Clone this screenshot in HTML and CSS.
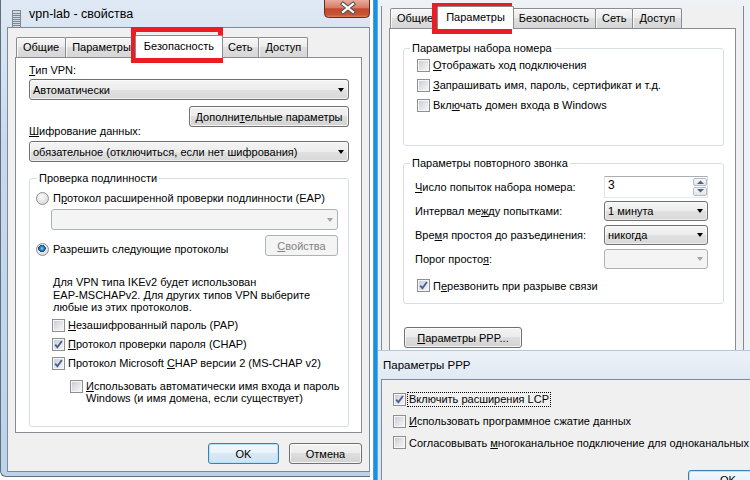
FILE: index.html
```html
<!DOCTYPE html>
<html>
<head>
    <meta charset="utf-8">
    <title>vpn-lab - свойства</title>
    <link rel="stylesheet" href="styles.css">
</head>
<body>
    <!-- security tab window -->
    <div class="win win-left">
        <div class="titlebar">
            <svg class="app-icon" width="9" height="18" viewBox="0 0 9 18">
                <rect x="0.5" y="0.5" width="8" height="17" fill="#d3d9e0" stroke="#7d8894"/>
                <path d="M1 3.5h7M1 5.5h7M1 7.5h7M1 9.5h7M1 11.5h7M1 13.5h7M1 15.5h7" stroke="#7a8795" stroke-width="1"/>
            </svg>
            <span class="title">vpn-lab - свойства</span>
            <div class="close">
                <svg width="46" height="18" viewBox="0 0 46 18">
                    <defs>
                        <linearGradient id="closeFill" x1="0" y1="0" x2="0" y2="1">
                            <stop offset="0" stop-color="#e8ab9c"/>
                            <stop offset="0.45" stop-color="#d67b66"/>
                            <stop offset="0.5" stop-color="#c4472d"/>
                            <stop offset="0.85" stop-color="#c85536"/>
                            <stop offset="1" stop-color="#e28c6c"/>
                        </linearGradient>
                    </defs>
                    <path d="M0.5 0V13.5a4 4 0 0 0 4 4H41.5a4 4 0 0 0 4-4V0" fill="url(#closeFill)" stroke="#6b2a1f"/>
                    <path d="M19 4l10 8M29 4l-10 8" stroke="#5a5a5a" stroke-width="4.4" stroke-linecap="square"/>
                    <path d="M19 4l10 8M29 4l-10 8" stroke="#fff" stroke-width="2.2" stroke-linecap="square"/>
                </svg>
            </div>
        </div>
        <div class="client">
            <div class="tabs">
                <div class="tab">Общие</div>
                <div class="tab">Параметры</div>
                <div class="tab sel">Безопасность</div>
                <div class="tab">Сеть</div>
                <div class="tab">Доступ</div>
            </div>
            <div class="panel sec">
                <div class="lbl lbl-vpn"><u>Т</u>ип VPN:</div>
                <div class="combo combo-vpn">Автоматически</div>
                <div class="row-end"><div class="btn btn-more">Дополни<u>т</u>ельные параметры</div></div>
                <div class="lbl lbl-enc"><u>Ш</u>ифрование данных:</div>
                <div class="combo combo-enc">обязательное (отключиться, если нет шифрования)</div>
                <fieldset class="group auth">
                    <legend>Проверка подлинности</legend>
                    <div class="opt opt-eap"><span class="rad"></span><span>П<u>р</u>отокол расширенной проверки подлинности (EAP)</span></div>
                    <div class="combo dis combo-eap"></div>
                    <div class="opt-row">
                        <div class="opt"><span class="rad on"></span><span>Разрешить сле<u>д</u>ующие протоколы</span></div>
                        <div class="btn dis btn-props"><u>С</u>войства</div>
                    </div>
                    <p class="note">Для VPN типа IKEv2 будет использован<br>EAP-MSCHAPv2. Для других типов VPN выберите<br>любые из этих протоколов.</p>
                    <div class="ck ck-first"><span class="chk"></span><span><u>Н</u>езашифрованный пароль (PAP)</span></div>
                    <div class="ck"><span class="chk"><svg width="11" height="11" viewBox="0 0 11 11"><path d="M2.2 5.6l2.2 2.7L8.9 2" fill="none" stroke="#4b5f96" stroke-width="1.9"/></svg></span><span><u>П</u>ротокол проверки пароля (CHAP)</span></div>
                    <div class="ck"><span class="chk"><svg width="11" height="11" viewBox="0 0 11 11"><path d="M2.2 5.6l2.2 2.7L8.9 2" fill="none" stroke="#4b5f96" stroke-width="1.9"/></svg></span><span>Протокол Microsoft <u>C</u>HAP версии 2 (MS-CHAP v2)</span></div>
                    <div class="ck ck-sub"><span class="chk"></span><span><u>И</u>спользовать автоматически имя входа и пароль<br>Windows (и имя домена, если существует)</span></div>
                </fieldset>
            </div>
            <div class="actions">
                <div class="btn def btn-ok">OK</div>
                <div class="btn btn-cancel">Отмена</div>
            </div>
        </div>
    </div>

    <div class="divider"></div>

    <div class="col-right">
        <!-- options tab window -->
        <div class="win win-right">
            <div class="client">
                <div class="tabs">
                    <div class="tab">Общие</div>
                    <div class="tab sel">Параметры</div>
                    <div class="tab">Безопасность</div>
                    <div class="tab">Сеть</div>
                    <div class="tab">Доступ</div>
                </div>
                <div class="panel opts">
                    <fieldset class="group dial">
                        <legend>Параметры набора номера</legend>
                        <div class="ck"><span class="chk"></span><span><u>О</u>тображать ход подключения</span></div>
                        <div class="ck"><span class="chk"></span><span><u>З</u>апрашивать имя, пароль, сертификат и т.д.</span></div>
                        <div class="ck"><span class="chk"></span><span>Вкл<u>ю</u>чать домен входа в Windows</span></div>
                    </fieldset>
                    <fieldset class="group redial">
                        <legend>Параметры повторного звонка</legend>
                        <div class="frow frow-first">
                            <span><u>Ч</u>исло попыток набора номера:</span>
                            <div class="spin">
                                <span class="spin-val">3</span>
                                <span class="spin-btns">
                                    <span class="sb"><svg width="7" height="4" viewBox="0 0 7 4"><path d="M0 4L3.5 0.5L7 4z" fill="#4d6185"/></svg></span>
                                    <span class="sb"><svg width="7" height="4" viewBox="0 0 7 4"><path d="M0 0L3.5 3.5L7 0z" fill="#4d6185"/></svg></span>
                                </span>
                            </div>
                        </div>
                        <div class="frow">
                            <span>Интервал ме<u>ж</u>ду попытками:</span>
                            <div class="combo combo-sm">1 минута</div>
                        </div>
                        <div class="frow">
                            <span>Вре<u>м</u>я простоя до разъединения:</span>
                            <div class="combo combo-sm">никогда</div>
                        </div>
                        <div class="frow">
                            <span>Порог просто<u>я</u>:</span>
                            <div class="combo dis combo-sm"></div>
                        </div>
                        <div class="ck ck-redial"><span class="chk"><svg width="11" height="11" viewBox="0 0 11 11"><path d="M2.2 5.6l2.2 2.7L8.9 2" fill="none" stroke="#4b5f96" stroke-width="1.9"/></svg></span><span>П<u>е</u>резвонить при разрыве связи</span></div>
                    </fieldset>
                    <div class="btn btn-ppp"><u>П</u>араметры PPP...</div>
                </div>
            </div>
        </div>

        <!-- PPP settings window -->
        <div class="win win-ppp">
            <div class="ppp-title">Параметры PPP</div>
            <div class="client">
                <div class="ck prow"><span class="chk"><svg width="11" height="11" viewBox="0 0 11 11"><path d="M2.2 5.6l2.2 2.7L8.9 2" fill="none" stroke="#4b5f96" stroke-width="1.9"/></svg></span><span class="focus">Включить расширения LCP</span></div>
                <div class="ck prow"><span class="chk"></span><span><u>И</u>спользовать программное сжатие данных</span></div>
                <div class="ck prow"><span class="chk"></span><span>Согласовывать <u>м</u>ногоканальное подключение для одноканальных</span></div>
                <div class="btn def btn-ppp-ok">OK</div>
            </div>
        </div>
    </div>

    <div class="mark mark-left"></div>
    <div class="mark mark-right"></div>
</body>
</html>
```

FILE: styles.css
```css
*, *::before, *::after {
    box-sizing: border-box;
}

body {
    margin: 0;
    width: 750px;
    height: 480px;
    overflow: hidden;
    display: flex;
    background: #fff;
    font-family: "Liberation Sans", Arial, sans-serif;
    font-size: 11px;
    line-height: 14px;
    color: #000;
}

u {
    text-decoration: underline;
    text-underline-offset: 1px;
}

/* window frames */
.win-left {
    width: 370px;
    height: 477px;
    flex: none;
    display: flex;
    flex-direction: column;
    padding-left: 6px;
    border-left: 1px solid #5f6f82;
    border-bottom: 1px solid #5f6f82;
    border-bottom-left-radius: 6px;
    background: linear-gradient(to bottom, #dfe9f4, #c9d9ec 30%, #bdd2e9);
}

.titlebar {
    height: 27px;
    flex: none;
    display: flex;
    align-items: flex-start;
}

.app-icon {
    margin: 10px 0 0 5px;
}

.title {
    margin: 7px 0 0 8px;
    font-size: 12.5px;
    line-height: 14px;
}

.close {
    margin-left: auto;
    height: 18px;
}

.close svg {
    display: block;
}

.client {
    border: 1px solid #7c8a9b;
    background: #f0f0f0;
    padding: 0 7px;
}

.win-left .client {
    height: 445px;
    flex: none;
}

.divider {
    width: 8px;
    flex: none;
    background: linear-gradient(to right, #fff 3px, #62b5ef 3px, #1b8fe2 4px, #1b8fe2 7px, #5aaeea 7px);
}

.col-right {
    width: 372px;
    flex: none;
    display: flex;
    flex-direction: column;
}

.win-right {
    height: 350px;
    flex: none;
    overflow: hidden;
    padding: 0 6px 0 3px;
    background: #eef2f7;
}

.win-right .client {
    border-top: 0;
    height: 420px;
}

.win-ppp {
    flex: 1;
    display: flex;
    flex-direction: column;
    padding-left: 3px;
    border-top: 1px solid #b7c7da;
    background: linear-gradient(to bottom, #edf2f8, #e0e9f3 28px, #d9e4f0);
    overflow: hidden;
}

.ppp-title {
    height: 28px;
    flex: none;
    padding-left: 2px;
    line-height: 28px;
    font-size: 11.5px;
}

.win-ppp .client {
    flex: 1;
    border-right: 0;
    border-bottom: 0;
    padding: 9px 0 0 11px;
    white-space: nowrap;
    overflow: hidden;
}

/* tabs */
.tabs {
    display: flex;
    align-items: flex-end;
    height: 22px;
    margin-top: 7px;
    padding-left: 1px;
}

.win-right .tabs {
    margin-top: 6px;
}

.tab {
    height: 20px;
    padding: 0 6px;
    line-height: 18px;
    margin-right: -1px;
    border: 1px solid #898c95;
    border-bottom: 0;
    border-radius: 2px 2px 0 0;
    background: linear-gradient(#f7f7f7, #ebebeb 50%, #dfdfdf 50%, #d6d6d6);
    box-shadow: inset 1px 1px 0 rgba(255, 255, 255, 0.8);
}

.tab.sel {
    height: 23px;
    margin: 0 -2px -1px -2px;
    padding: 0 8px;
    line-height: 20px;
    background: #fff;
    box-shadow: none;
    position: relative;
    z-index: 1;
}

.panel {
    height: 376px;
    border: 1px solid #898c95;
    background: #fff;
    display: flex;
    flex-direction: column;
}

.panel > * {
    flex: none;
}

.sec {
    padding: 0 12px 0 13px;
}

.opts {
    padding: 0 11px 0 13px;
}

/* security tab */
.lbl-vpn {
    margin-top: 5px;
}

.combo-vpn {
    margin-top: 2px;
}

.row-end {
    display: flex;
    justify-content: flex-end;
    margin-top: 6px;
}

.btn-more {
    width: 160px;
}

.lbl-enc {
    margin-top: -3px;
}

.combo-enc {
    margin-top: 3px;
    height: 20px;
}

.group {
    margin: 0;
    border: 1px solid #d5dfe5;
    border-radius: 3px;
    min-width: 0;
}

.group legend {
    padding: 0 2px;
    line-height: 14px;
}

.auth {
    margin-top: 9px;
    height: 256px;
    padding: 0 10px 0 6px;
}

.auth legend {
    margin-left: 1px;
}

.opt {
    display: flex;
    align-items: center;
    height: 14px;
    white-space: nowrap;
}

.opt-eap {
    margin-top: 6px;
}

.combo-eap {
    margin: 4px 0 0 15px;
    height: 20px;
}

.opt-row {
    display: flex;
    align-items: flex-end;
    justify-content: space-between;
    margin-top: 5px;
}

.btn-props {
    width: 73px;
}

.note {
    margin: 20px 0 0 17px;
    line-height: 12.5px;
}

.ck {
    display: flex;
    align-items: center;
    height: 19px;
    margin-left: 16px;
    white-space: nowrap;
}

.ck-first {
    margin-top: 2px;
}

.ck-sub {
    align-items: flex-start;
    height: auto;
    margin: 7px 0 0 34px;
    line-height: 12px;
}

.actions {
    display: flex;
    justify-content: flex-end;
    gap: 10px;
    margin-top: 10px;
}

.btn-ok {
    width: 71px;
}

.btn-cancel {
    width: 73px;
}

/* options tab */
.dial {
    margin-top: 12px;
    height: 105px;
    padding: 0 0 0 13px;
}

.dial legend {
    margin-left: -7px;
}

.dial .ck {
    margin-left: 0;
    height: 20px;
}

.redial {
    margin-top: 10px;
    height: 148px;
    padding: 0 15px 0 11px;
}

.redial legend {
    margin-left: -5px;
}

.frow {
    display: flex;
    align-items: center;
    justify-content: space-between;
    height: 24px;
    padding-top: 1px;
}

.frow-first {
    margin-top: 4px;
}

.ck-redial {
    margin: 6px 0 0 2px;
}

.btn-ppp {
    width: 118px;
    margin: 23px 0 0 1px;
    align-self: flex-start;
}

/* PPP window */
.win-ppp .ck {
    margin-left: 0;
}

.prow {
    height: 21.5px;
}

.focus {
    outline: 1px dotted #000;
    padding: 0 1px;
    margin-left: -1px;
    line-height: 13px;
}

.btn-ppp-ok {
    width: 80px;
    margin: 16px 0 0 295px;
}

/* controls */
.btn {
    height: 21px;
    display: flex;
    align-items: center;
    justify-content: center;
    border: 1px solid #707070;
    border-radius: 3px;
    background: linear-gradient(#f3f3f3, #ececec 50%, #dedede 50%, #d2d2d2);
    box-shadow: inset 0 0 0 1px rgba(255, 255, 255, 0.75);
    white-space: nowrap;
}

.btn.def {
    border-color: #3c7fb1;
    background: linear-gradient(#f2f8fc, #e9f3fb 50%, #d9e9f5 50%, #cfe3f2);
    box-shadow: inset 0 0 0 1px #b6e1f8;
}

.btn.dis {
    border-color: #adb2b5;
    background: #f4f4f4;
    box-shadow: none;
    color: #838383;
}

.combo {
    height: 21px;
    display: flex;
    align-items: center;
    padding: 0 4px 0 3px;
    border: 1px solid #707070;
    border-radius: 3px;
    background: linear-gradient(#f4f4f4, #ededed 50%, #e1e1e1 50%, #d8d8d8);
    box-shadow: inset 0 0 0 1px rgba(255, 255, 255, 0.6);
    white-space: nowrap;
}

.combo::after {
    content: "";
    margin-left: auto;
    border-left: 3.5px solid transparent;
    border-right: 3.5px solid transparent;
    border-top: 4px solid #000;
}

.combo.dis {
    border-color: #adb2b5;
    background: #f4f4f4;
    box-shadow: none;
}

.combo.dis::after {
    border-top-color: #a3a3a3;
}

.combo-sm {
    width: 104px;
    height: 20px;
}

.spin {
    width: 104px;
    height: 22px;
    display: flex;
    justify-content: space-between;
    border: 1px solid;
    border-color: #abadb3 #dbdfe6 #e3e9ef #e2e3ea;
    background: #fff;
}

.spin-val {
    padding: 1px 0 0 3px;
    font-size: 12px;
}

.spin-btns {
    display: flex;
    flex-direction: column;
    gap: 1px;
    padding: 1px 0 1px 0;
}

.sb {
    width: 14px;
    height: 9px;
    display: flex;
    align-items: center;
    justify-content: center;
    border: 1px solid #b5bcc7;
    border-radius: 2px;
    background: linear-gradient(#f6f7f9, #e2e6eb);
}

.sb svg {
    display: block;
}

.rad {
    width: 13px;
    height: 13px;
    flex: none;
    margin-right: 4px;
    border: 1px solid #8e8f8f;
    border-radius: 50%;
    background: radial-gradient(circle at 40% 35%, #fbfbfb, #e2e2e2 60%, #cfcfcf);
}

.rad.on {
    background:
        radial-gradient(circle at 45% 40%, #9fd8fb 0, #3f8fd2 1.5px, #1c5c9c 3px, #114478 3.6px, transparent 3.8px),
        radial-gradient(circle at 40% 35%, #fbfbfb, #e2e2e2 60%, #cfcfcf);
}

.chk {
    width: 13px;
    height: 13px;
    flex: none;
    margin-right: 3px;
    border: 1px solid #8e8f8f;
    background: linear-gradient(135deg, #c4c9d0, #e6e8eb 60%, #f6f6f6);
    box-shadow: inset 0 0 0 1px #f6f6f6;
}

.chk svg {
    display: block;
}

/* red highlight frames */
.mark {
    position: absolute;
    border: 5px solid #ec1c24;
}

.mark-left {
    left: 131px;
    top: 27px;
    width: 92px;
    height: 36px;
}

.mark-right {
    left: 432px;
    top: 3px;
    width: 80px;
    height: 31px;
}
```
